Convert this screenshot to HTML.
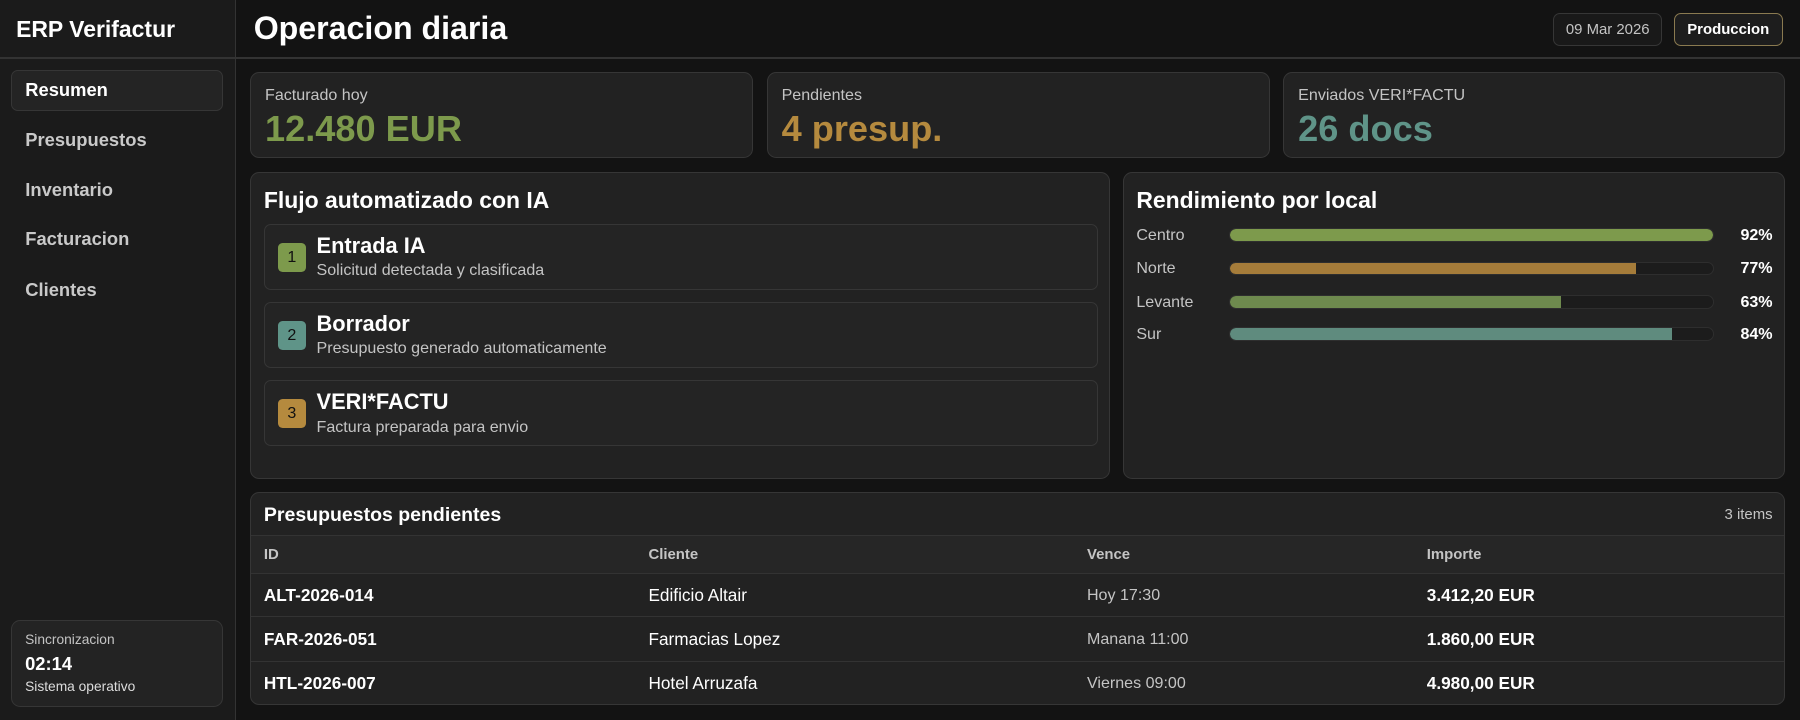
<!DOCTYPE html>
<html><head><meta charset="utf-8"><style>
*{box-sizing:border-box;margin:0;padding:0}
html,body{width:1800px;height:720px;overflow:hidden;background:#131313}
body{font-family:"Liberation Sans",sans-serif;color:#fff}
#r{zoom:1.147959;width:1568px;height:627px;position:relative;background:#131313}
.a{position:absolute}
.side{left:0;top:0;width:206px;height:627px;background:#1b1b1b;border-right:1px solid #333}
.hl{left:0;top:50px;width:1568px;height:1px;background:#333}
.nav{left:22px;font-size:16px;font-weight:bold;color:#c9c9c9;line-height:20px}
.card{background:#222;border:1px solid #363636;border-radius:8px}
.lbl{font-size:14px;color:#c4c4c4}
.val{font-size:31.5px;font-weight:bold}
.step{left:11px;width:727px;height:58px;background:#242424;border:1px solid #363636;border-radius:6px}
.bd{left:11px;top:16px;width:25px;height:25px;border-radius:4px;color:#111;font-size:14px;text-align:center;line-height:25px}
.st{left:45px;top:7px;font-size:19px;font-weight:bold}
.ss{left:45px;top:32px;font-size:14px;color:#c4c4c4}
.rl{left:11px;font-size:14px;color:#c4c4c4}
.bar{left:92px;width:422px;height:12px;border-radius:6px;background:#1c1c1c;border:1px solid #2e2e2e;overflow:hidden}
.bar i{display:block;height:100%;border-radius:6px 0 0 6px}
.pc{right:10px;font-size:14px;font-weight:bold}
.row{left:0;width:1337px;height:1px;background:#333}
.td{font-size:15px}
</style></head><body><div id="r">
<div class="a side"></div>
<div class="a hl"></div>
<div class="a" style="left:14px;top:14px;font-size:20px;font-weight:bold">ERP Verifactur</div>
<div class="a" style="left:10px;top:61px;width:184px;height:36px;background:#242424;border:1px solid #363636;border-radius:6px"></div>
<div class="a nav" style="top:69px;color:#fff">Resumen</div>
<div class="a nav" style="top:112px">Presupuestos</div>
<div class="a nav" style="top:156px">Inventario</div>
<div class="a nav" style="top:199px">Facturacion</div>
<div class="a nav" style="top:243px">Clientes</div>
<div class="a card" style="left:10px;top:540px;width:184px;height:76px;background:#232323">
 <div class="a" style="left:11px;top:10px;font-size:12px;color:#c4c4c4">Sincronizacion</div>
 <div class="a" style="left:11px;top:28px;font-size:16px;font-weight:bold">02:14</div>
 <div class="a" style="left:11px;top:51px;font-size:12px;color:#ddd">Sistema operativo</div>
</div>
<div class="a" style="left:221px;top:9px;font-size:28px;font-weight:bold">Operacion diaria</div>
<div class="a" style="left:1353px;top:11px;width:95px;height:29px;border:1px solid #363636;border-radius:6px;font-size:13px;color:#c4c4c4;text-align:center;line-height:27px;background:#191919">09 Mar 2026</div>
<div class="a" style="left:1458px;top:11px;width:95px;height:29px;border:1px solid #8a7a50;border-radius:6px;font-size:13px;font-weight:bold;text-align:center;line-height:27px;background:#1d1d1d">Produccion</div>

<div class="a card" style="left:218px;top:63px;width:438px;height:75px"><div class="a lbl" style="left:12px;top:11px">Facturado hoy</div><div class="a val" style="left:12px;top:30px;color:#7d9a4c">12.480 EUR</div></div>
<div class="a card" style="left:668px;top:63px;width:438px;height:75px"><div class="a lbl" style="left:12px;top:11px">Pendientes</div><div class="a val" style="left:12px;top:30px;color:#b58a3e">4 presup.</div></div>
<div class="a card" style="left:1118px;top:63px;width:437px;height:75px"><div class="a lbl" style="left:12px;top:11px">Enviados VERI*FACTU</div><div class="a val" style="left:12px;top:30px;color:#5f9488">26 docs</div></div>

<div class="a card" style="left:218px;top:150px;width:749px;height:267px">
 <div class="a" style="left:11px;top:12px;font-size:20px;font-weight:bold">Flujo automatizado con IA</div>
 <div class="a step" style="top:44px"><div class="a bd" style="background:#7d9a4c">1</div><div class="a st">Entrada IA</div><div class="a ss">Solicitud detectada y clasificada</div></div>
 <div class="a step" style="top:112px"><div class="a bd" style="background:#5f9488">2</div><div class="a st">Borrador</div><div class="a ss">Presupuesto generado automaticamente</div></div>
 <div class="a step" style="top:180px"><div class="a bd" style="background:#b58a3e">3</div><div class="a st">VERI*FACTU</div><div class="a ss">Factura preparada para envio</div></div>
</div>

<div class="a card" style="left:978px;top:150px;width:577px;height:267px">
 <div class="a" style="left:11px;top:12px;font-size:20px;font-weight:bold">Rendimiento por local</div>
 <div class="a rl" style="top:46px">Centro</div><div class="a bar" style="top:48px"><i style="width:100%;background:#7d9a4c;border-radius:6px"></i></div><div class="a pc" style="top:46px">92%</div>
 <div class="a rl" style="top:75px">Norte</div><div class="a bar" style="top:77px"><i style="width:84%;background:#a57c3a"></i></div><div class="a pc" style="top:75px">77%</div>
 <div class="a rl" style="top:104px">Levante</div><div class="a bar" style="top:106px"><i style="width:68.5%;background:#6e8a4e"></i></div><div class="a pc" style="top:104px">63%</div>
 <div class="a rl" style="top:132px">Sur</div><div class="a bar" style="top:134px"><i style="width:91.5%;background:#5f8b7e"></i></div><div class="a pc" style="top:132px">84%</div>
</div>

<div class="a card" style="left:218px;top:429px;width:1337px;height:185px;overflow:hidden">
 <div class="a" style="left:11px;top:9px;font-size:17px;font-weight:bold">Presupuestos pendientes</div>
 <div class="a" style="right:10px;top:11px;font-size:13px;color:#c4c4c4">3 items</div>
 <div class="a row" style="top:36px"></div>
 <div class="a" style="left:0;top:37px;width:1337px;height:32px;background:#262626"></div>
 <div class="a" style="left:11px;top:46px;font-size:13px;font-weight:bold;color:#c4c4c4">ID</div>
 <div class="a" style="left:346px;top:46px;font-size:13px;font-weight:bold;color:#c4c4c4">Cliente</div>
 <div class="a" style="left:728px;top:46px;font-size:13px;font-weight:bold;color:#c4c4c4">Vence</div>
 <div class="a" style="left:1024px;top:46px;font-size:13px;font-weight:bold;color:#c4c4c4">Importe</div>
 <div class="a row" style="top:69px"></div>
 <div class="a td" style="left:11px;top:80px;font-weight:bold">ALT-2026-014</div><div class="a td" style="left:346px;top:80px">Edificio Altair</div><div class="a" style="left:728px;top:81px;font-size:14px;color:#c4c4c4">Hoy 17:30</div><div class="a td" style="left:1024px;top:80px;font-weight:bold">3.412,20 EUR</div>
 <div class="a row" style="top:107px"></div>
 <div class="a td" style="left:11px;top:118px;font-weight:bold">FAR-2026-051</div><div class="a td" style="left:346px;top:118px">Farmacias Lopez</div><div class="a" style="left:728px;top:119px;font-size:14px;color:#c4c4c4">Manana 11:00</div><div class="a td" style="left:1024px;top:118px;font-weight:bold">1.860,00 EUR</div>
 <div class="a row" style="top:146px"></div>
 <div class="a td" style="left:11px;top:156px;font-weight:bold">HTL-2026-007</div><div class="a td" style="left:346px;top:156px">Hotel Arruzafa</div><div class="a" style="left:728px;top:157px;font-size:14px;color:#c4c4c4">Viernes 09:00</div><div class="a td" style="left:1024px;top:156px;font-weight:bold">4.980,00 EUR</div>
</div>
</div></body></html>
